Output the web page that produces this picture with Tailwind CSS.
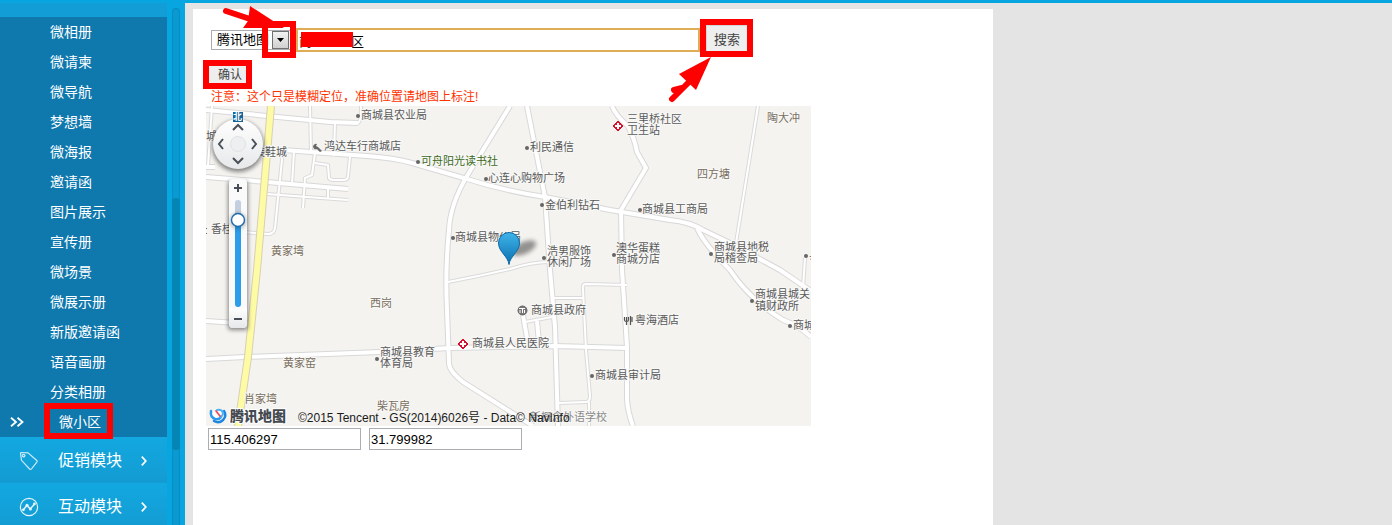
<!DOCTYPE html>
<html lang="zh-CN">
<head>
    <meta charset="UTF-8">
    <meta name="viewport" content="width=device-width, initial-scale=1.0">
    <title>微小区</title>
    <script src="https://cdn.jsdelivr.net/npm/@tailwindcss/browser@4"></script>
</head>
<body class="h-screen flex flex-col overflow-hidden bg-[#e4e4e4] font-['Liberation_Sans','Noto_Sans_CJK_SC',sans-serif]">
    <div class="h-[3px] shrink-0 bg-[#07a6e1]"></div>
    <div class="flex flex-1 min-h-0">
        <!-- Sidebar -->
        <aside class="flex w-[185px] shrink-0 bg-[#07a6e1] text-white overflow-hidden">
            <nav class="w-[167px] shrink-0">
                <div class="h-[14px] bg-[#129dd6]"></div>
                <ul class="bg-[#0f79ae] text-sm leading-[30px]">
                    <li><a href="#" class="block h-[30px] pl-[50px]">微相册</a></li>
                    <li><a href="#" class="block h-[30px] pl-[50px]">微请柬</a></li>
                    <li><a href="#" class="block h-[30px] pl-[50px]">微导航</a></li>
                    <li><a href="#" class="block h-[30px] pl-[50px]">梦想墙</a></li>
                    <li><a href="#" class="block h-[30px] pl-[50px]">微海报</a></li>
                    <li><a href="#" class="block h-[30px] pl-[50px]">邀请函</a></li>
                    <li><a href="#" class="block h-[30px] pl-[50px]">图片展示</a></li>
                    <li><a href="#" class="block h-[30px] pl-[50px]">宣传册</a></li>
                    <li><a href="#" class="block h-[30px] pl-[50px]">微场景</a></li>
                    <li><a href="#" class="block h-[30px] pl-[50px]">微展示册</a></li>
                    <li><a href="#" class="block h-[30px] pl-[50px]">新版邀请函</a></li>
                    <li><a href="#" class="block h-[30px] pl-[50px]">语音画册</a></li>
                    <li><a href="#" class="block h-[30px] pl-[50px]">分类相册</a></li>
                    <li class="relative">
                        <a href="#" class="flex items-center h-[30px] pl-[10px]">
                            <svg class="w-[14px] h-[10px] mr-[35px]" viewBox="0 0 14 10" fill="none" stroke="#fff" stroke-width="1.8"><path d="M1 .8 6 5 1 9.2M7.5 .8l5 4.2-5 4.2"/></svg>
                            微小区
                        </a>
                        <span class="absolute left-[44px] -top-1 w-[69px] h-9 border-6 border-[#f00]"></span>
                    </li>
                </ul>
                <a href="#" class="flex items-center h-[46px] pt-[2px] pl-[19px] bg-linear-to-b from-[#13a8e1] to-[#139bd2]">
                    <svg class="w-5 h-5 mr-[19px]" viewBox="0 0 20 20" fill="none" stroke="#c8ebf9" stroke-width="1.2"><path d="M1.5 2.5Q1.5 1.5 2.5 1.5L9 1.8 17.8 9.5Q18.5 10.2 18 11L12.5 17.8Q11.5 18.8 10.6 18L2.5 9.3Z"/><circle cx="4.6" cy="4.6" r="1.3"/></svg>
                    促销模块
                    <svg class="w-[6px] h-[10px] ml-[19px]" viewBox="0 0 6 10" fill="none" stroke="#fff" stroke-width="1.7"><path d="M.8 .6 4.8 5 .8 9.4"/></svg>
                </a>
                <a href="#" class="flex items-center h-[46px] pt-[2px] pl-[19px] bg-linear-to-b from-[#13a8e1] to-[#139bd2]">
                    <svg class="w-5 h-5 mr-[19px]" viewBox="0 0 20 20" fill="none" stroke="#e4f5fc" stroke-width="1.2"><circle cx="10" cy="10" r="8.6"/><path d="M4.3 12.8 8 8.4l3.3 3.5 4.2-5" stroke-width="1.5"/><g fill="#e4f5fc" stroke="none"><circle cx="4.4" cy="12.8" r="1.4"/><circle cx="8" cy="8.3" r="1.5"/><circle cx="11.4" cy="12" r="1.5"/><circle cx="15.4" cy="6.9" r="1.4"/></g></svg>
                    互动模块
                    <svg class="w-[6px] h-[10px] ml-[19px]" viewBox="0 0 6 10" fill="none" stroke="#fff" stroke-width="1.7"><path d="M.8 .6 4.8 5 .8 9.4"/></svg>
                </a>
            </nav>
            <!-- Scroll track -->
            <div class="w-2 mt-[5px] ml-[5px] rounded-t bg-[#0a99d0] border-x border-t border-[#078dc2]">
                <div class="w-2 -ml-px h-[252px] mt-[189px] rounded bg-[#0585b3]"></div>
            </div>
        </aside>

        <main class="flex-1 pl-2 pt-[6px]">
            <div class="relative w-full max-w-[800px] h-full bg-white pt-4 pl-[13px]">
                <form class="flex items-center h-[30px] pl-[5px]">
                    <div class="relative w-20 mr-[5px]">
                        <select aria-label="地图" class="block w-20 h-5 appearance-none border border-[#abadb3] bg-white pl-[5px] text-[13px] leading-[18px] text-black">
                            <option>腾讯地图</option>
                        </select>
                        <span class="absolute right-[2px] top-px w-[17px] h-[18px] border border-[#707070] bg-linear-to-b from-[#f2f2f2] to-[#d0d0d0] flex items-center justify-center pointer-events-none">
                            <svg class="w-[7px] h-1" viewBox="0 0 7 4"><path d="M0 0h7L3.5 4z"/></svg>
                        </span>
                        <span class="absolute -right-[5px] -top-[9px] w-[34px] h-[37px] border-6 border-[#f00] pointer-events-none"></span>
                    </div>
                    <div class="relative w-[404px] mr-[6px]">
                        <input type="text" aria-label="地址" value="商&#12288;&#12288;&#12288;区" class="block w-full h-6 border-2 border-[#dfac58] px-px text-[13px] text-black outline-none">
                        <span class="absolute left-[5px] top-1 w-[52px] h-[15px] bg-[#f00]"></span>
                    </div>
                    <div class="relative self-start">
                        <button type="button" class="block w-[41px] h-[26px] pt-[3px] border-t border-l border-[#d5d5d5] bg-[#eee] text-[13px] text-[#444]">搜索</button>
                        <span class="absolute -inset-[6px] border-6 border-[#f00] pointer-events-none"></span>
                    </div>
                </form>
                <div class="relative w-[37px] h-[17px] mt-[11px] ml-[3px]">
                    <button type="button" class="block w-full h-full bg-[#eee] pl-[9px] text-left text-xs leading-4 text-[#444]">确认</button>
                    <span class="absolute -inset-[6px] border-6 border-[#f00] pointer-events-none"></span>
                </div>
                <p class="h-[23px] pt-[5px] pl-[5px] text-xs leading-[18px] text-[#ff3300]">注意：这个只是模糊定位，准确位置请地图上标注!</p>

                <!-- Map -->
                <svg class="block w-[605px] max-w-full font-['Liberation_Sans','Noto_Sans_CJK_SC',sans-serif]" viewBox="206 106 605 320">
                    <defs>
                        <g id="thin">
                            <path d="M310 106 311 152M335 122 334 156M283 150 275 228Q274 234 268 234L243 232M294 151 292 184M315 153 312 175 305 178 303 208M315 163 328 165 329 178Q330 180 334 180L343 180Q348 180 348 176L350 157M328 189V198M267 194 348 200M328 122 358 123Q361 122 361 106M212 106 208 166"/>
                            <path d="M758 106 736 243M448 282Q480 276 510 269 532 262 548 262M553 298H583M627 285 586 284Q582 284 583 289L586 350 590 396Q590 402 586 402L559 403M589 402V426M805 258 803 288M552 317 525 322"/>
                        </g>
                        <g id="roads">
                            <path d="M206 110 330 122 358 123M206 177 267 182 348 189M206 167H215M206 321 252 324M523 315 527 338M537 321 539 343"/>
                            <path d="M283 150 367 156Q395 158 412 163L467 179Q505 191 545 197L610 210 670 220Q690 222 703 230L730 243 780 270 811 291"/>
                            <path d="M510 106 467 176Q450 205 449 230 445 270 447 310L449 363Q449 371 463 382L533 426"/>
                            <path d="M527 106 545 197 550 270 555 327 558 426M612 106Q616 116 628 126 635 140 637 152L646 168 621 210 622 270 627 347V400Q628 413 633 426"/>
                            <path d="M697 228Q704 244 730 270 750 300 783 320 800 326 811 337M206 359 245 357 380 352 450 348 555 346 627 348"/>
                        </g>
                        <linearGradient id="pin" x1="0" y1="0" x2="0" y2="1"><stop offset="0" stop-color="#3fb4ea"/><stop offset="1" stop-color="#0c6fae"/></linearGradient>
                        <linearGradient id="pan" x1="0" y1="0" x2="0" y2="1"><stop offset="0" stop-color="#fff"/><stop offset="1" stop-color="#e6e8ea"/></linearGradient>
                        <filter id="soft" x="-40%" y="-40%" width="180%" height="180%"><feGaussianBlur stdDeviation="2"/></filter>
                    </defs>
                    <rect x="206" y="106" width="605" height="320" fill="#f4f3f0"/>
                    <g fill="none" stroke-linejoin="round">
                        <use href="#thin" stroke="#dadada" stroke-width="4"/>
                        <use href="#roads" stroke="#d8d8d8" stroke-width="6"/>
                        <use href="#thin" stroke="#fff" stroke-width="2"/>
                        <use href="#roads" stroke="#fff" stroke-width="4"/>
                        <path d="M271 106 263 200 257 270 248 357 238 426" stroke="#d9cfb5" stroke-width="8"/>
                        <path d="M271 106 263 200 257 270 248 357 238 426" stroke="#fdfba4" stroke-width="6"/>
                    </g>
                    <!-- Places -->
                    <g font-size="11" fill="#5a5a5a" stroke="#f8f8f6" stroke-width="2" paint-order="stroke">
                        <text x="361" y="119">商城县农业局</text>
                        <text x="627" y="123">三里桥社区</text>
                        <text x="627" y="134">卫生站</text>
                        <text x="324" y="150">鸿达车行商城店</text>
                        <text x="206" y="140">城</text>
                        <text x="254" y="156">装鞋城</text>
                        <text x="530" y="151">利民通信</text>
                        <text x="421" y="165" fill="#3c6a1c">可舟阳光读书社</text>
                        <text x="488" y="182">心连心购物广场</text>
                        <text x="545" y="209">金伯利钻石</text>
                        <text x="642" y="213">商城县工商局</text>
                        <text x="211" y="233">香桂</text>
                        <text x="455" y="241">商城县物价局</text>
                        <text x="547" y="255">浩男服饰</text>
                        <text x="547" y="266">休闲广场</text>
                        <text x="616" y="252">澳华蛋糕</text>
                        <text x="616" y="263">商城分店</text>
                        <text x="714" y="251">商城县地税</text>
                        <text x="714" y="262">局稽查局</text>
                        <text x="809" y="259">县</text>
                        <text x="755" y="298">商城县城关</text>
                        <text x="755" y="310">镇财政所</text>
                        <text x="793" y="329">商城</text>
                        <text x="531" y="314">商城县政府</text>
                        <text x="635" y="324">粤海酒店</text>
                        <text x="472" y="347">商城县人民医院</text>
                        <text x="380" y="356">商城县教育</text>
                        <text x="380" y="367">体育局</text>
                        <text x="595" y="379">商城县审计局</text>
                        <text x="530" y="421" fill="#8a8a8a">新概念外语学校</text>
                        <g fill="#7a6f60">
                            <text x="767" y="122">陶大冲</text>
                            <text x="697" y="178">四方塘</text>
                            <text x="271" y="255">黄家塆</text>
                            <text x="370" y="307">西岗</text>
                            <text x="283" y="367">黄家窑</text>
                            <text x="244" y="403">肖家塆</text>
                            <text x="377" y="410">柴瓦房</text>
                        </g>
                    </g>
                    <g fill="#666">
                        <circle cx="358" cy="116" r="2"/><circle cx="527" cy="148" r="2"/><circle cx="418" cy="162" r="2"/><circle cx="486" cy="179" r="2"/>
                        <circle cx="542" cy="205" r="2"/><circle cx="640" cy="210" r="2"/><circle cx="453" cy="238" r="2"/><circle cx="544" cy="258" r="2"/>
                        <circle cx="614" cy="255" r="2"/><circle cx="711" cy="254" r="2"/><circle cx="806" cy="256" r="2"/><circle cx="752" cy="301" r="2"/>
                        <circle cx="790" cy="326" r="2"/><circle cx="377" cy="359" r="2"/><circle cx="592" cy="376" r="2"/>
                        <rect x="206" y="228" width="1" height="1"/><rect x="206" y="233" width="1" height="1"/>
                    </g>
                    <g id="clinic"><path d="M618 121l5 5-5 5-5-5z" fill="#d6102c" stroke="#d6102c" stroke-width="1" stroke-linejoin="round"/><path d="M618 123v6M615 126h6" stroke="#fff" stroke-width="2"/></g>
                    <use href="#clinic" x="-155" y="218"/>
                    <path d="M313 147a3 3 0 0 1 4-3l-1 2 2 1 1 1 3 3-2 1-3-3q-3 1-4-2z" fill="#666"/>
                    <g fill="none" stroke="#666"><circle cx="522.500" cy="310.500" r="4.500" fill="#777"/><path d="M519 308.500h6M520 310v3M522.500 309v4M524.500 310v3" stroke="#fff"/></g>
                    <path d="M624.500 317v3q0 1.500 2 1.500t2-1.500v-3M626.500 317v8M630.500 316v9M632 317v5" fill="none" stroke="#555" stroke-width="1.200"/>
                    <!-- Pin -->
                    <ellipse cx="524" cy="248" rx="13" ry="6" transform="rotate(-25 524 248)" fill="#000" opacity=".4" filter="url(#soft)"/>
                    <path d="M509 264.500C508 256 498.500 252 498.500 243a10.500 10.500 0 0 1 21 0c0 9-9.500 13-10.500 21.500z" fill="url(#pin)" stroke="#0b6ba8"/>
                    <!-- Pan control -->
                    <circle cx="238" cy="146" r="26" fill="#000" opacity=".45" filter="url(#soft)"/>
                    <circle cx="238" cy="144" r="25" fill="url(#pan)"/>
                    <circle cx="238" cy="144" r="7.500" fill="#eeeff0" stroke="#e0e2e4"/>
                    <path d="M233 130l5-5 5 5M233 158l5 5 5-5M223 139l-4 5 4 5M252 139l4 5-4 5" fill="none" stroke="#4a5058" stroke-width="2"/>
                    <rect x="233" y="112" width="10" height="10" fill="#14649c"/>
                    <text x="233" y="120" font-size="9" font-weight="bold" fill="#fff">北</text>
                    <!-- Zoom control -->
                    <rect x="228" y="181" width="20" height="149" rx="3" fill="#000" opacity=".45" filter="url(#soft)"/>
                    <rect x="229" y="179" width="18" height="149" rx="4" fill="#fafafa"/>
                    <path d="M229 308h18v16q0 4-4 4h-10q-4 0-4-4z" fill="url(#pan)"/>
                    <path d="M234 188h8M238 184v8M234 319h8" stroke="#4a4f57" stroke-width="2"/>
                    <rect x="235" y="200" width="6" height="24" rx="3" fill="#c3cfdf"/>
                    <path d="M235 220h6v84a3 3 0 0 1-6 0z" fill="#2b9dea"/>
                    <circle cx="238" cy="221" r="8" fill="#000" opacity=".25" filter="url(#soft)"/>
                    <circle cx="238" cy="220" r="6.500" fill="#fff" stroke="#1b6cb0" stroke-width="1.400"/>
                    <!-- Logo and copyright -->
                    <g fill="none" stroke-linecap="round">
                        <circle cx="219" cy="416" r="7" fill="#fff" stroke="none"/>
                        <path d="M211 411q-1 6 4 8 4 1 6-2" stroke="#2f98ea" stroke-width="2.500"/>
                        <path d="M214 421q5 3 9-1 4-4 1-9" stroke="#1f86dd" stroke-width="2.500"/>
                        <path d="M217 410q5-1 6 3 0 3-3 4" stroke="#4fb2f4" stroke-width="2"/>
                        <path d="M216 411l4 5" stroke="#e8505a" stroke-width="1.800"/>
                    </g>
                    <text x="230" y="421" font-size="14" font-weight="900" fill="#454a50" stroke="#fff" stroke-width="2" paint-order="stroke">腾讯地图</text>
                    <text x="298" y="422" font-size="12" fill="#1a1a1a">©2015 Tencent - GS(2014)6026号 - Data© NavInfo</text>
                </svg>

                <div class="flex gap-2 mt-[2px] pl-[2px]">
                    <input type="text" aria-label="经度" value="115.406297" class="w-[153px] h-[22px] border border-[#abadb3] px-px text-[13px] text-black">
                    <input type="text" aria-label="纬度" value="31.799982" class="w-[153px] h-[22px] border border-[#abadb3] px-px text-[13px] text-black">
                </div>

                <!-- Hand-drawn arrows -->
                <svg class="absolute left-0 top-0 w-[600px] h-[120px] -mt-[9px] pointer-events-none" viewBox="193 0 600 120" fill="#f00" stroke="#f00" stroke-linecap="round">
                    <path d="M226 11 250 19" stroke-width="6"/>
                    <path d="M250 6 284 28 243 28 248 21z" stroke="none"/>
                    <path d="M672 99 690 81M674 90 682 88" stroke-width="6"/>
                    <path d="M711 57 696 90 679 74z" stroke="none"/>
                </svg>
            </div>
        </main>
    </div>
</body>
</html>
